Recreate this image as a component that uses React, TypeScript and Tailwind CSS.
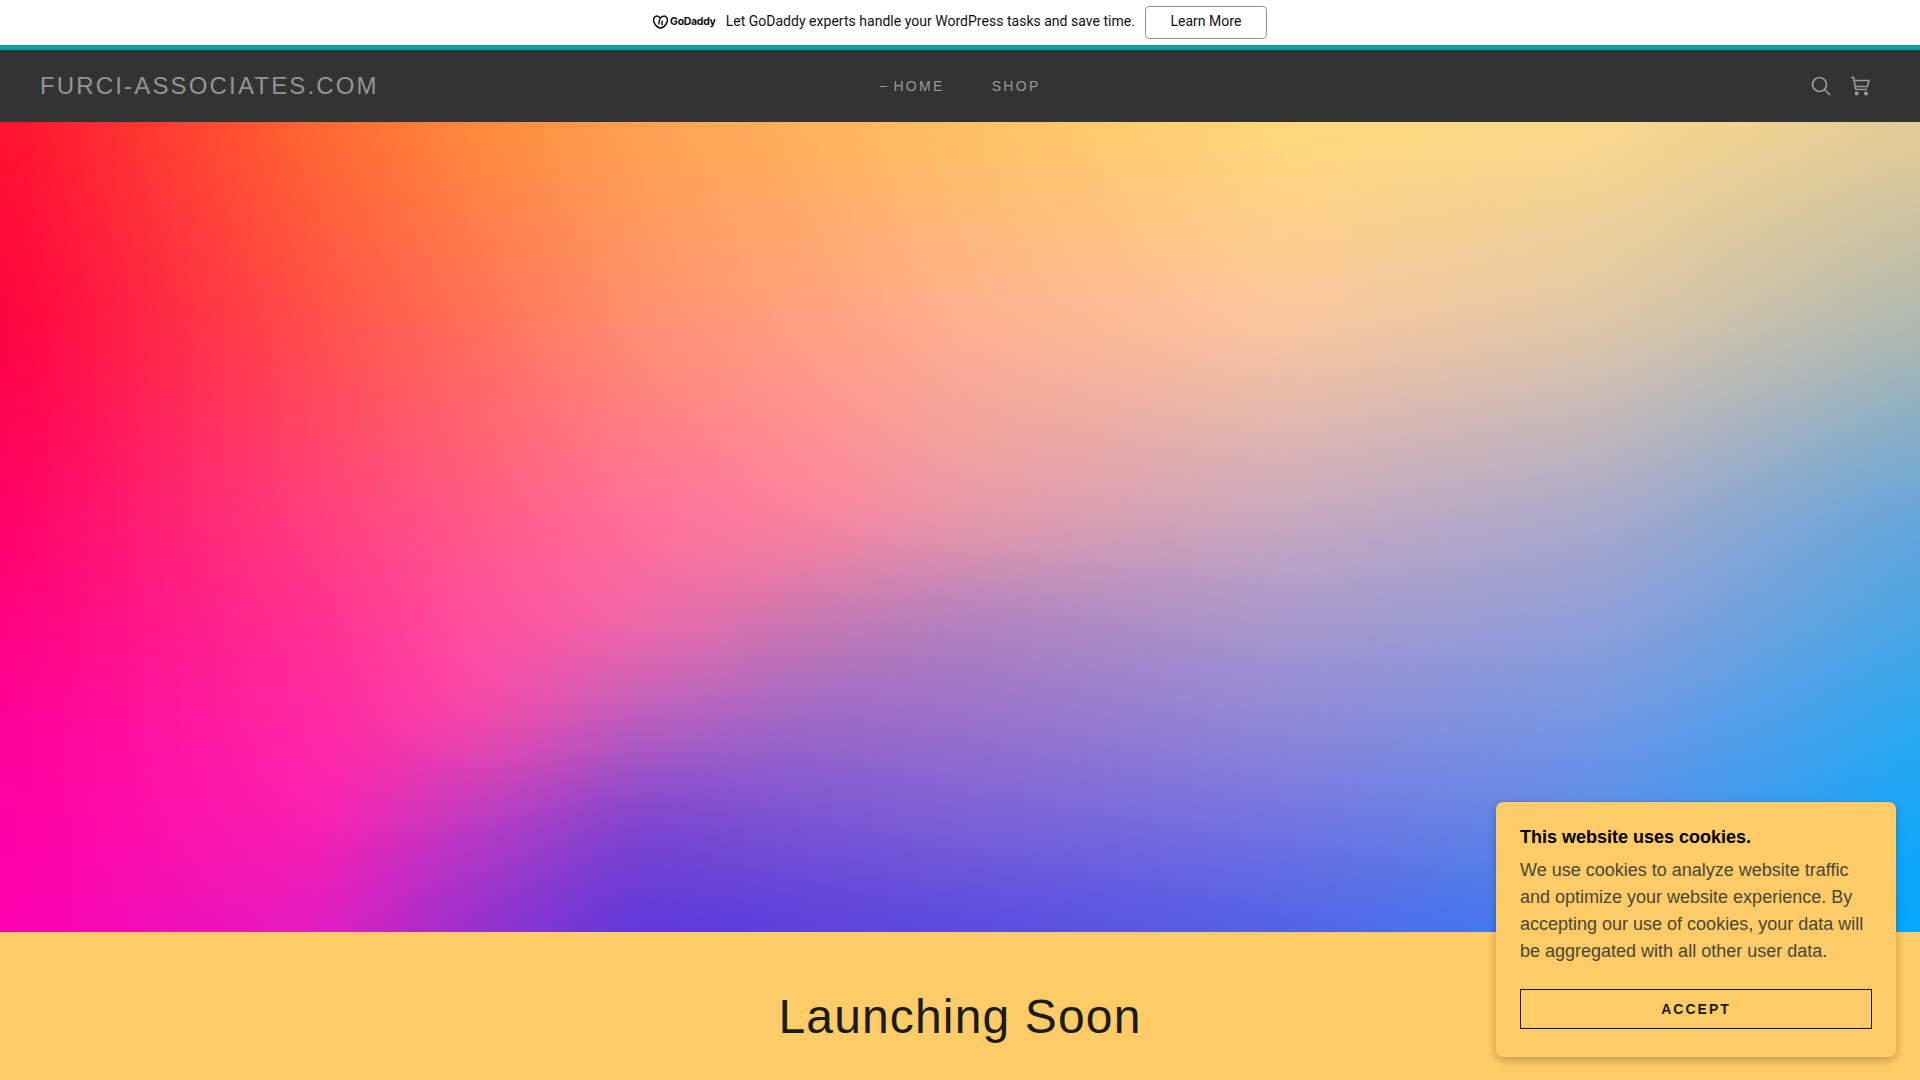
import React from "react";

const xs = [0, 320, 480, 640, 800, 960, 1280, 1600, 1920];
const ys = [0, 200, 400, 500, 600, 700, 810];
const mesh = [
  ["#ff1030", "#ff6a30", "#ff8c3c", "#ffa24e", "#ffb258", "#ffc060", "#ffd978", "#fbd98a", "#e6cc96"],
  ["#ff0040", "#ff5048", "#ff7058", "#ff9070", "#ffa080", "#ffb090", "#fcc79e", "#e0c8a8", "#b0b8b0"],
  ["#ff0068", "#ff4080", "#ff5a88", "#ff6e9a", "#ff80a0", "#e898a8", "#c8a8c0", "#a8a8cc", "#60a5dc"],
  ["#ff0080", "#ff3090", "#ff50a0", "#f468a8", "#c878b0", "#b080c0", "#a898cc", "#909ed8", "#48a6e4"],
  ["#ff0098", "#ff28a4", "#f848a8", "#b860c0", "#9c68c8", "#9a70c8", "#9088d8", "#7498e4", "#28a8f0"],
  ["#ff00a4", "#fc20b0", "#b83cc4", "#7c44d0", "#7a54d4", "#7c60d8", "#7474e0", "#5c8ce8", "#14a8f8"],
  ["#ff00b0", "#e01cc0", "#9030d0", "#5a38dc", "#5a3edc", "#5848e0", "#5060e8", "#3880f0", "#00aaff"],
];

const rgb = (h: string) => [1, 3, 5].map((i) => parseInt(h.slice(i, i + 2), 16));

function segment(list: number[], v: number): [number, number] {
  const c = Math.max(list[0], Math.min(list[list.length - 1], v));
  let i = 0;
  while (i < list.length - 2 && c > list[i + 1]) i++;
  return [i, (c - list[i]) / (list[i + 1] - list[i])];
}

function colorAt(x: number, y: number) {
  const [i, u] = segment(xs, x);
  const [j, v] = segment(ys, y);
  const a = rgb(mesh[j][i]);
  const b = rgb(mesh[j][i + 1]);
  const c = rgb(mesh[j + 1][i]);
  const d = rgb(mesh[j + 1][i + 1]);
  const out = a.map((_, k) => Math.round((a[k] * (1 - u) + b[k] * u) * (1 - v) + (c[k] * (1 - u) + d[k] * u) * v));
  return `rgb(${out[0]},${out[1]},${out[2]})`;
}

const CELL = 30;
const cells: { x: number; y: number; fill: string }[] = [];
for (let y = -120; y < 930; y += CELL) {
  for (let x = -120; x < 2040; x += CELL) {
    cells.push({ x, y, fill: colorAt(x + CELL / 2, y + CELL / 2) });
  }
}

function Hero() {
  return (
    <svg className="block w-full h-[810px]" viewBox="0 0 1920 810" preserveAspectRatio="none">
      <defs>
        <filter id="mesh" x="-120" y="-120" width="2160" height="1050" filterUnits="userSpaceOnUse" colorInterpolationFilters="sRGB">
          <feGaussianBlur stdDeviation="28" />
        </filter>
      </defs>
      <g filter="url(#mesh)">
        {cells.map((c) => (
          <rect key={c.x + "-" + c.y} x={c.x} y={c.y} width={CELL + 1} height={CELL + 1} fill={c.fill} />
        ))}
      </g>
    </svg>
  );
}

export default function App() {
  return (
    <div className="relative h-screen overflow-hidden bg-[#fdcb67] font-['Liberation_Sans',sans-serif]">
      <div className="h-[45px] bg-white flex items-center justify-center gap-[10px] font-['Roboto',sans-serif] text-[14px] tracking-[0.02px] text-[#111]">
        <div className="flex items-center gap-[2px] pb-[2px]">
          <svg width="15" height="14" viewBox="0 0 24 22" fill="none" stroke="#111" strokeWidth="2.4">
            <path d="M12 4.500C9.500 1 5.500 .8 3 3c-3 2.700-2.200 8 .5 12 2 3 5 5.500 8.500 5.500s6.500-2.500 8.500-5.500c2.700-4 3.500-9.300 .5-12-2.500-2.200-6.500-2-9 1.500C10 8 9 11 10 15" />
            <path d="M15 9c-1 3-1 5 0 7" />
          </svg>
          <span className="font-['Inter',sans-serif] font-bold text-[10.5px] tracking-[-0.3px]">GoDaddy</span>
        </div>
        <span className="pb-[2px]">Let GoDaddy experts handle your WordPress tasks and save time.</span>
        <button className="w-[122px] h-[33px] pb-[2px] bg-white border border-[#8d99a8] rounded-[4px] text-[14px]">Learn More</button>
      </div>
      <div className="h-[5px] bg-[#00a4a6]" />
      <header className="h-[72px] bg-[#333333] grid grid-cols-3 items-center pl-[40px] pr-[50px]">
        <div className="text-[24px] tracking-[0.09em] text-[#949494] whitespace-nowrap">FURCI-ASSOCIATES.COM</div>
        <nav className="flex justify-center items-center gap-[47px] pl-[11px] text-[14px] tracking-[0.165em] text-[#9a9a9a]">
          <span className="flex items-center gap-[6px]">
            <span className="w-[7px] h-px bg-[#9a9a9a]" />
            HOME
          </span>
          <span>SHOP</span>
        </nav>
        <div className="flex justify-end items-center gap-[19px] text-[#9a9a9a]">
          <svg width="20" height="20" viewBox="0 0 20 20" fill="none" stroke="currentColor" strokeWidth="1.7">
            <circle cx="8.500" cy="8.500" r="7" />
            <path d="M13.500 13.500 19 19" />
          </svg>
          <svg width="20" height="20" viewBox="0 0 20 20" fill="none" stroke="currentColor" strokeWidth="1.6">
            <path d="M1 1.500h2.500l2.300 12h11.200M4.200 4.500H19l-1.500 6H5.400" />
            <circle cx="6.700" cy="17.500" r="1.300" fill="currentColor" />
            <circle cx="16" cy="17.500" r="1.300" fill="currentColor" />
          </svg>
        </div>
      </header>
      <Hero />
      <section className="flex justify-center pt-[56px]">
        <h1 className="text-[48px] leading-[58px] tracking-[0.024em] text-[#1b1b1b]">Launching Soon</h1>
      </section>
      <div className="absolute right-[24px] bottom-[23px] w-[400px] h-[255px] p-[24px] bg-[#fdcb67] rounded-[7px] shadow-[0_3px_8px_rgba(0,0,0,0.25)]">
        <div className="text-[18px] leading-[22px] font-bold text-black">This website uses cookies.</div>
        <p className="mt-[9px] text-[18px] leading-[27px] text-[#4a4636]">
          We use cookies to analyze website traffic and optimize your website experience. By accepting our use of cookies, your data will be aggregated with all other user data.
        </p>
        <button className="mt-[24px] w-[352px] h-[40px] border-[1.5px] border-[#1b1b1b] text-[14px] font-bold tracking-[0.143em] text-[#1b1b1b]">ACCEPT</button>
      </div>
    </div>
  );
}
